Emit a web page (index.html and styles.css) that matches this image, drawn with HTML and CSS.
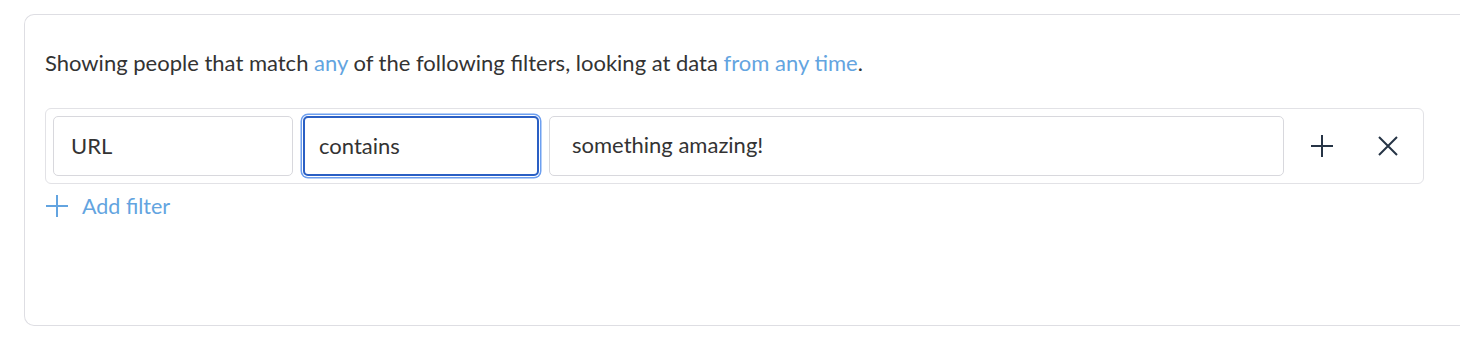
FILE: index.html
```html
<!DOCTYPE html>
<html lang="en">
<head>
  <meta charset="UTF-8" />
  <title>People filters</title>
  <link rel="stylesheet" href="styles.css">
</head>
<body>

  <div class="card">
    <p class="summary">
      Showing people that match <a href="#" class="link">any</a> of the following filters, looking at data <a href="#" class="link">from any time</a>.
    </p>

    <div class="filter-row">
      <div class="field">URL</div>
      <div class="field focused">contains</div>
      <div class="field value">something amazing!</div>
      <button class="icon-btn" title="Add">
        <svg width="24" height="24" viewBox="0 0 24 24"><path d="M12 1v22M1 12h22" stroke="#263445" stroke-width="2" fill="none"/></svg>
      </button>
      <button class="icon-btn" title="Remove">
        <svg width="20" height="20" viewBox="0 0 20 20"><path d="M1 1l18 18M19 1L1 19" stroke="#263445" stroke-width="2" fill="none"/></svg>
      </button>
    </div>

    <a href="#" class="add-filter">
      <svg width="24" height="24" viewBox="0 0 24 24"><path d="M12 1v22M1 12h22" stroke="#63a4e0" stroke-width="2" fill="none"/></svg>
      Add filter
    </a>
  </div>

</body>
</html>
```

FILE: styles.css
```css
body {
  margin: 0;
  padding: 14px 0 0 24px;
  font-family: Lato, "Open Sans", sans-serif;
  color: #333;
  background: #fff;
}

.card {
  height: 312px;
  border: 1px solid #dedee3;
  border-right: none;
  border-radius: 10px 0 0 10px;
  padding: 33px 36px 0 20px;
  box-sizing: border-box;
}

.summary {
  margin: 0 0 30px;
  font-size: 22px;
  line-height: 30px;
}

.link {
  color: #63a4e0;
  text-decoration: none;
}

.filter-row {
  display: flex;
  align-items: center;
  gap: 10px;
  width: 1379px;
  box-sizing: border-box;
  padding: 7px;
  border: 1px solid #e2e2e6;
  border-radius: 6px;
}

.field {
  width: 240px;
  height: 60px;
  box-sizing: border-box;
  border: 1px solid #d8d8dd;
  border-radius: 5px;
  padding: 0 17px 2px;
  display: flex;
  align-items: center;
  font-size: 22px;
}

.field.focused {
  width: 236px;
  border: 2px solid #2a5fc4;
  padding-left: 14px;
  box-shadow: 0 0 0 1px #fff, 0 0 0 2.5px #6d9ff0;
}

.field.value {
  flex: 1;
  padding: 0 22px 4px;
}

.icon-btn {
  width: 56px;
  height: 56px;
  flex: none;
  border: none;
  background: none;
  padding: 0;
  display: flex;
  align-items: center;
  justify-content: center;
  cursor: pointer;
}

.add-filter {
  display: inline-flex;
  align-items: center;
  gap: 13px;
  margin-top: 9px;
  color: #63a4e0;
  font-size: 21.5px;
  text-decoration: none;
}
```
